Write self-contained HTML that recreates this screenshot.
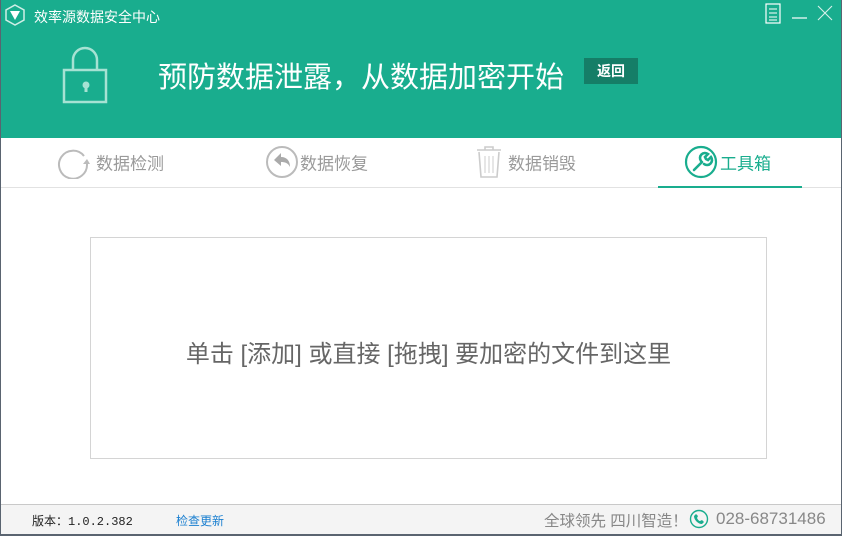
<!DOCTYPE html>
<html><head><meta charset="utf-8"><style>
*{margin:0;padding:0;box-sizing:border-box}
body{width:842px;height:536px;overflow:hidden;background:#fff;font-family:"Liberation Sans","Noto Sans CJK SC",sans-serif;position:relative}
.hdr{position:absolute;left:0;top:0;width:842px;height:138px;background:#19ad8e}
.abs{position:absolute}
.tab{position:absolute;top:162px;transform:translateY(-50%);font-size:17px;color:#9a9a9a}
</style></head><body>
<div class="hdr"></div>
<svg class="abs" style="left:4px;top:4px" width="22" height="22" viewBox="0 0 22 22"><polygon points="11,1 20,6 20,16 11,21 2,16 2,6" fill="none" stroke="#cfeee6" stroke-width="1.5"/><polygon points="6,7 16,7 11,16" fill="#fff"/></svg>
<div class="abs" style="left:34px;top:7px;color:#fff;font-size:14px">效率源数据安全中心</div>
<svg class="abs" style="left:765px;top:3px" width="72" height="22"><rect x="1" y="1" width="14" height="19" fill="none" stroke="#fff" stroke-width="1.2"/><path d="M4 6h8M4 10h8M4 14h8M4 17h8" stroke="#fff"/><path d="M27 15h15" stroke="#fff" stroke-width="1.2"/><path d="M53 3l14 14M67 3l-14 14" stroke="#d8f0ea" stroke-width="1.1"/></svg>
<svg class="abs" style="left:62px;top:46px" width="46" height="58"><path d="M11 24V14a12 12 0 0 1 24 0v10" fill="none" stroke="#a6e2d3" stroke-width="2.5"/><rect x="2" y="24" width="42" height="32" fill="none" stroke="#a6e2d3" stroke-width="2.5"/><circle cx="24" cy="39" r="3.5" fill="#a6e2d3"/><rect x="22.5" y="40" width="3" height="6" fill="#a6e2d3"/></svg>
<div class="abs" style="left:158px;top:54px;color:#fff;font-size:29px">预防数据泄露，从数据加密开始</div>
<div class="abs" style="left:584px;top:58px;width:54px;height:26px;background:#157e67;color:#fff;font-size:14px;font-weight:bold;text-align:center;line-height:26px">返回</div>
<div class="abs" style="left:0;top:187px;width:842px;height:1px;background:#e2e2e2"></div>
<div class="abs" style="left:658px;top:186px;width:144px;height:2px;background:#19ad8e"></div>
<svg class="abs" style="left:57px;top:145px" width="34" height="34"><path d="M27 11A14 14 0 1 0 30 19" fill="none" stroke="#bbb" stroke-width="2"/><path d="M26 19l4-5 3 5z" fill="#bbb"/></svg>
<div class="tab" style="left:96px">数据检测</div>
<svg class="abs" style="left:265px;top:145px" width="34" height="34"><circle cx="17" cy="17" r="15" fill="none" stroke="#bbb" stroke-width="2"/><path d="M9 15l7-7v4c6 0 9 4 9 10-2-4-5-5-9-5v4z" fill="#aaa"/></svg>
<div class="tab" style="left:300px">数据恢复</div>
<svg class="abs" style="left:475px;top:145px" width="28" height="34"><path d="M2 5h24M10 5V2h8v3" fill="none" stroke="#ccc" stroke-width="1.6"/><path d="M4 7l2 25h16l2-25" fill="none" stroke="#ccc" stroke-width="1.6"/><path d="M10 11v17M14 11v17M18 11v17" stroke="#ccc"/></svg>
<div class="tab" style="left:508px">数据销毁</div>
<svg class="abs" style="left:684px;top:145px" width="34" height="34"><circle cx="17" cy="17" r="15" fill="none" stroke="#19ad8e" stroke-width="2.2"/><path d="M10 25l8-8M17 16a5 5 0 0 1 7-7l-3 3 1 2 2 1 3-3a5 5 0 0 1-7 7" fill="none" stroke="#19ad8e" stroke-width="2.6" stroke-linecap="round"/></svg>
<div class="tab" style="left:720px;color:#19ad8e">工具箱</div>
<div class="abs" style="left:90px;top:237px;width:677px;height:222px;border:1px solid #d4d4d4"></div>
<div class="abs" style="left:90px;top:334px;width:677px;text-align:center;font-size:24px;color:#666;white-space:nowrap">单击 [添加] 或直接 [拖拽] 要加密的文件到这里</div>
<div class="abs" style="left:0;top:504px;width:842px;height:32px;background:#f4f4f4;border-top:1px solid #c9c9c9"></div>
<div class="abs" style="left:0;top:534px;width:842px;height:2px;background:#5a6470"></div>
<div class="abs" style="left:0;top:0;width:1px;height:536px;background:#5a6470"></div>
<div class="abs" style="right:0;top:0;width:1px;height:536px;background:#5a6470"></div>
<div class="abs" style="left:32px;top:512px;font-size:12px;color:#222;font-family:'Liberation Mono','Noto Sans CJK SC',monospace">版本：1.0.2.382</div>
<div class="abs" style="left:176px;top:512px;font-size:12px;color:#1a7fd0">检查更新</div>
<div class="abs" style="left:544px;top:509px;font-size:15.5px;color:#888;white-space:nowrap">全球领先 四川智造！</div>
<svg class="abs" style="left:689px;top:509px" width="20" height="20"><circle cx="10" cy="10" r="8.5" fill="none" stroke="#19ad8e" stroke-width="1.4"/><path d="M7 5l2 2-1 2c1 2 2 3 3 3l2-1 2 2-2 2c-4 0-8-4-8-8z" fill="#19ad8e"/></svg>
<div class="abs" style="left:716px;top:509px;font-size:17px;color:#888">028-68731486</div>
</body></html>
